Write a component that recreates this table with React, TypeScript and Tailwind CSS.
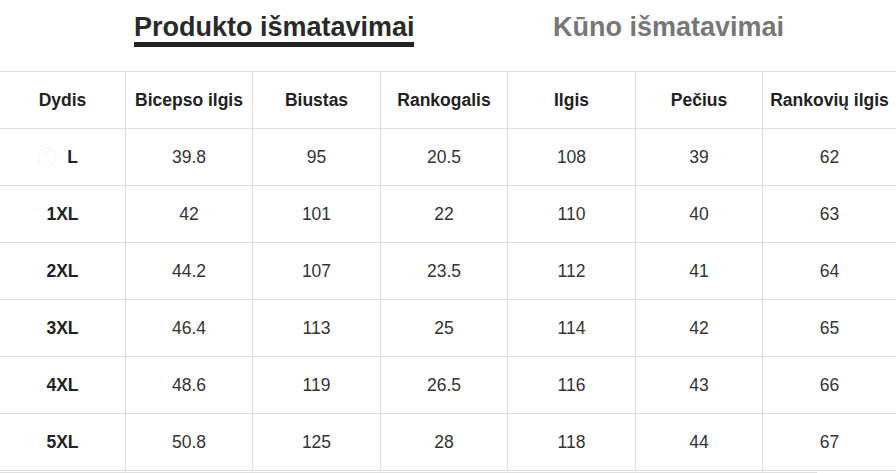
import React from "react";

const headers = ["Dydis", "Bicepso ilgis", "Biustas", "Rankogalis", "Ilgis", "Pečius", "Rankovių ilgis"];
const rows = [
  ["L", "39.8", "95", "20.5", "108", "39", "62"],
  ["1XL", "42", "101", "22", "110", "40", "63"],
  ["2XL", "44.2", "107", "23.5", "112", "41", "64"],
  ["3XL", "46.4", "113", "25", "114", "42", "65"],
  ["4XL", "48.6", "119", "26.5", "116", "43", "66"],
  ["5XL", "50.8", "125", "28", "118", "44", "67"],
];

const gridCols = "grid grid-cols-[125px_127px_128px_127px_128px_127px_134px]";

export default function App() {
  return (
    <div className="w-[896px] h-[473px] bg-white overflow-hidden font-['Liberation_Sans',Arial,sans-serif]">
      <div className="flex h-[71px] items-start pt-[12px]">
        <div className="ml-[134px] w-[280px] border-b-[5px] border-[#222] text-[27px] leading-[30px] font-bold text-[#2a2a2a] whitespace-nowrap">
          Produkto išmatavimai
        </div>
        <div className="ml-[139px] text-[27px] leading-[30px] font-bold text-[#777] whitespace-nowrap">
          Kūno išmatavimai
        </div>
      </div>
      <div className="border-b border-[#dedede]">
        <div className={`${gridCols} h-[57px] border-t border-[#dedede]`}>
          {headers.map((h, i) => (
            <div
              key={h}
              className={`flex items-center justify-center text-[17.5px] font-bold text-[#222] whitespace-nowrap ${i > 0 ? "border-l border-[#dedede]" : ""}`}
            >
              {h}
            </div>
          ))}
        </div>
        {rows.map((r, ri) => (
          <div key={ri} className={`${gridCols} h-[57px] border-t border-[#dedede]`}>
            {r.map((c, i) => (
              <div
                key={i}
                className={`flex items-center justify-center text-[17.5px] whitespace-nowrap ${
                  i > 0 ? "border-l border-[#dedede] text-[#333]" : "font-bold text-[#222]"
                }`}
              >
                {i === 0 && ri === 0 ? (
                  <span className="flex items-center">
                    <svg width="20" height="26" viewBox="0 0 20 26" fill="none" stroke="#f8f8f8" strokeWidth="1.5" className="-ml-[10px] mr-[10px]">
                      <circle cx="10" cy="13" r="9" />
                      <path d="M6 5l4 4 4-4" />
                    </svg>
                    {c}
                  </span>
                ) : (
                  c
                )}
              </div>
            ))}
          </div>
        ))}
      </div>
      <div className="mt-px w-[817px] h-px bg-[#dedede]" />
    </div>
  );
}
